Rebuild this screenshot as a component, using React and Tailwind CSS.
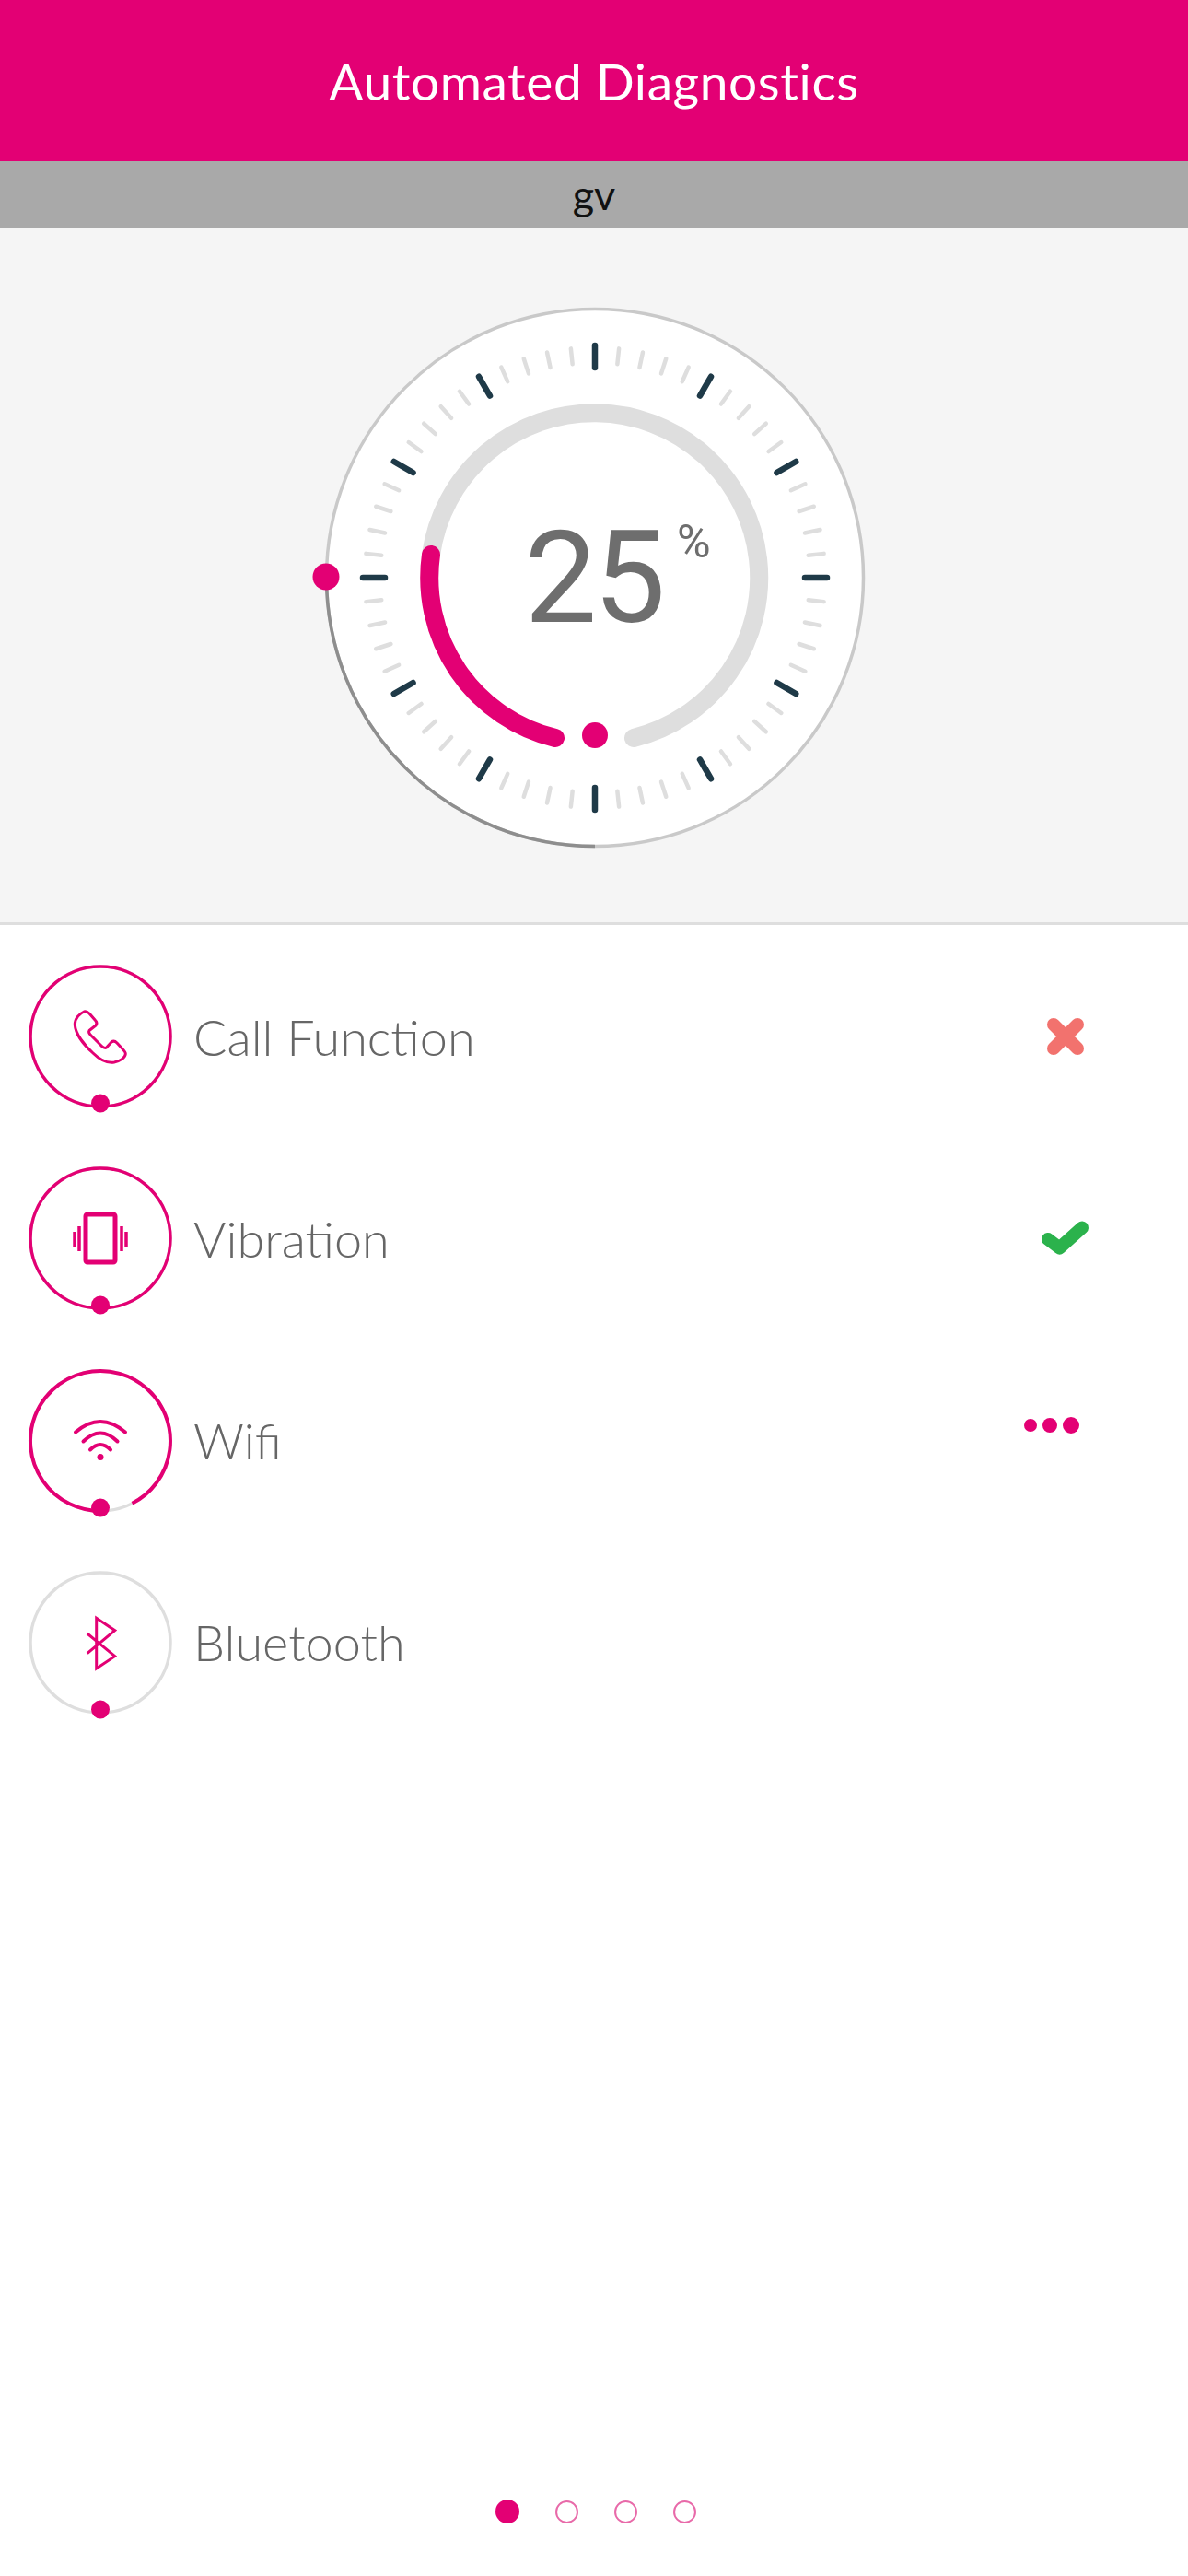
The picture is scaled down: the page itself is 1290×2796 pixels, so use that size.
import React from 'react';

const PINK = '#e30074';

// point on a circle, angle in degrees clockwise from 12 o'clock
const polar = (r, deg) => {
  const a = (deg * Math.PI) / 180;
  return [r * Math.sin(a), -r * Math.cos(a)];
};

const Gauge = () => {
  const ticks = Array.from({ length: 60 }, (_, i) => i * 6);

  return (
    <div className="relative w-[600px] h-[600px] ml-[1px]">
      <svg viewBox="-300 -300 600 600" className="w-full h-full overflow-visible">
        <circle r="291.5" fill="#fff" stroke="#c9c9c9" strokeWidth="3.5" />
        <path d="M-291.5 0 A291.5 291.5 0 0 0 0 291.5" fill="none" stroke="#8e8e8e" strokeWidth="3.5" />

        {ticks.map(deg => {
          const major = deg % 30 === 0;
          const [x1, y1] = polar(major ? 228 : 233, deg);
          const [x2, y2] = polar(major ? 252 : 250, deg);
          return (
            <line
              key={deg}
              x1={x1}
              y1={y1}
              x2={x2}
              y2={y2}
              stroke={major ? '#1f3a48' : '#dedede'}
              strokeWidth={major ? 6.5 : 4.5}
              strokeLinecap="round"
            />
          );
        })}

        {/* track, then progress, both leave a gap at the bottom */}
        <path d="M42 174 A179 179 0 1 0 -178 -25" fill="none" stroke="#dedede" strokeWidth="20" strokeLinecap="round" />
        <path d="M-178 -25 A179 179 0 0 0 -43 174" fill="none" stroke={PINK} strokeWidth="20" strokeLinecap="round" />

        <circle cx="0" cy="171" r="14" fill={PINK} />
        <circle cx="-292" cy="-1" r="14.5" fill={PINK} />
      </svg>

      <div className="absolute left-[224px] top-[230px] flex items-start text-[#6e6e6e] font-[Roboto,sans-serif]">
        <span className="text-[140px] leading-[140px] tracking-[-4px]">25</span>
        <span className="text-[50px] leading-[50px] mt-[6px] ml-[16px]">%</span>
      </div>
    </div>
  );
};

const PhoneGlyph = () => (
  <path
    d="M-17.7 -27 C-22 -25 -28 -20 -27.7 -12.7 C-27 -3 -18 9 -8 18 C0 26 8 29 15 28 C21 27 27 23 27.3 19 C27.5 17 26 15.5 24 13.5 L18 7 C16 5 14 4.5 12 6 L6.3 12.3 C5 13 3.5 12 2 11 L-10 -1 C-12 -3 -13 -5 -12 -6.5 L-5 -12 C-3.5 -14 -4 -16 -5.5 -17.5 L-12 -25 C-14 -27 -16 -27.5 -17.7 -27 Z"
    fill="none"
    stroke={PINK}
    strokeWidth="3"
    strokeLinejoin="round"
  />
);

const VibrationGlyph = () => (
  <g fill="none" stroke={PINK}>
    <rect x="-16" y="-26" width="32" height="52" rx="2" strokeWidth="5" />
    <path d="M-23 -13 V14 M23 -13 V14 M-28 -7 V9 M28 -7 V9" strokeWidth="3.5" />
  </g>
);

const WifiGlyph = () => (
  <g fill="none" stroke={PINK} strokeWidth="4" strokeLinecap="round">
    <path d="M-27 -9.5 Q0 -32.5 27 -9.5" />
    <path d="M-18.5 0.5 Q0 -17.5 18.5 0.5" />
    <path d="M-11 9.5 Q0 -1.5 11 9.5" />
    <circle cx="0" cy="17.5" r="3.5" fill={PINK} stroke="none" />
  </g>
);

const BluetoothGlyph = () => (
  <path
    d="M-14.3 -10 L15.7 14.7 L-4.3 28 V-26.7 L15.7 -13.3 L-14.3 11.7"
    fill="none"
    stroke={PINK}
    strokeWidth="3"
  />
);

const Badge = ({ ring, children }) => (
  <svg viewBox="-78 -78 156 156" className="w-[156px] h-[156px] shrink-0 overflow-visible">
    <circle r="76" fill="none" stroke="#dedede" strokeWidth="3.5" />
    {ring === 'full' && <circle r="76" fill="none" stroke={PINK} strokeWidth="3.5" />}
    {ring === 'partial' && (
      <path d="M0 76 A76 76 0 1 1 34.5 67.7" fill="none" stroke={PINK} strokeWidth="4" />
    )}
    {children}
    <circle cx="0" cy="72.5" r="10" fill={PINK} />
  </svg>
);

const CrossMark = () => (
  <svg width="60" height="60" viewBox="0 0 60 60">
    <path d="M17 17 L43 43 M43 17 L17 43" stroke="#f2726e" strokeWidth="14" strokeLinecap="round" />
  </svg>
);

const CheckMark = () => (
  <svg width="60" height="60" viewBox="0 0 60 60">
    <path d="M11 31 L23.5 40.5 L48 18.5" fill="none" stroke="#2bb24c" strokeWidth="14" strokeLinecap="round" strokeLinejoin="round" />
  </svg>
);

const BusyDots = () => (
  <div className="flex items-center gap-[6px] -mt-[33px] -ml-[30px]">
    <span className="w-[14px] h-[14px] rounded-full bg-[#e30074]" />
    <span className="w-[16px] h-[16px] rounded-full bg-[#e30074]" />
    <span className="w-[18px] h-[18px] rounded-full bg-[#e30074]" />
  </div>
);

const checks = [
  { name: 'Call Function', ring: 'full', glyph: <PhoneGlyph />, status: <CrossMark /> },
  { name: 'Vibration', ring: 'full', glyph: <VibrationGlyph />, status: <CheckMark /> },
  { name: 'Wifi', ring: 'partial', glyph: <WifiGlyph />, status: <BusyDots /> },
  { name: 'Bluetooth', ring: 'none', glyph: <BluetoothGlyph />, status: null },
];

export default function App() {
  return (
    <div className="relative w-[1290px] h-[2796px] bg-white flex flex-col font-[Lato,sans-serif]">
      <header className="h-[175px] shrink-0 bg-[#e30074] flex items-center justify-center pt-[2px]">
        <h1 className="text-white text-[55px] font-normal tracking-[0.6px]">Automated Diagnostics</h1>
      </header>

      <div className="h-[73px] shrink-0 bg-[#a9a9a9] flex items-center justify-center text-[45px] text-[#111]">
        gv
      </div>

      <section className="h-[756px] shrink-0 bg-[#f5f5f5] border-b-[3px] border-[#dedede] flex items-center justify-center pt-[5px]">
        <Gauge />
      </section>

      <ul className="flex flex-col gap-[63.3px] pl-[31px] pt-[43px]">
        {checks.map(check => (
          <li key={check.name} className="flex items-center">
            <Badge ring={check.ring}>{check.glyph}</Badge>
            <span className="ml-[23px] text-[54px] font-light text-[#666666]">{check.name}</span>
            <div className="ml-auto mr-[103px] w-[60px] flex justify-center">{check.status}</div>
          </li>
        ))}
      </ul>

      <div className="absolute left-[538px] top-[2713px] flex items-center gap-[39px]">
        <span className="w-[26px] h-[26px] rounded-full bg-[#e30074]" />
        <span className="w-[25px] h-[25px] rounded-full border-2 border-[#e86aa9]" />
        <span className="w-[25px] h-[25px] rounded-full border-2 border-[#e86aa9]" />
        <span className="w-[25px] h-[25px] rounded-full border-2 border-[#e86aa9]" />
      </div>
    </div>
  );
}
